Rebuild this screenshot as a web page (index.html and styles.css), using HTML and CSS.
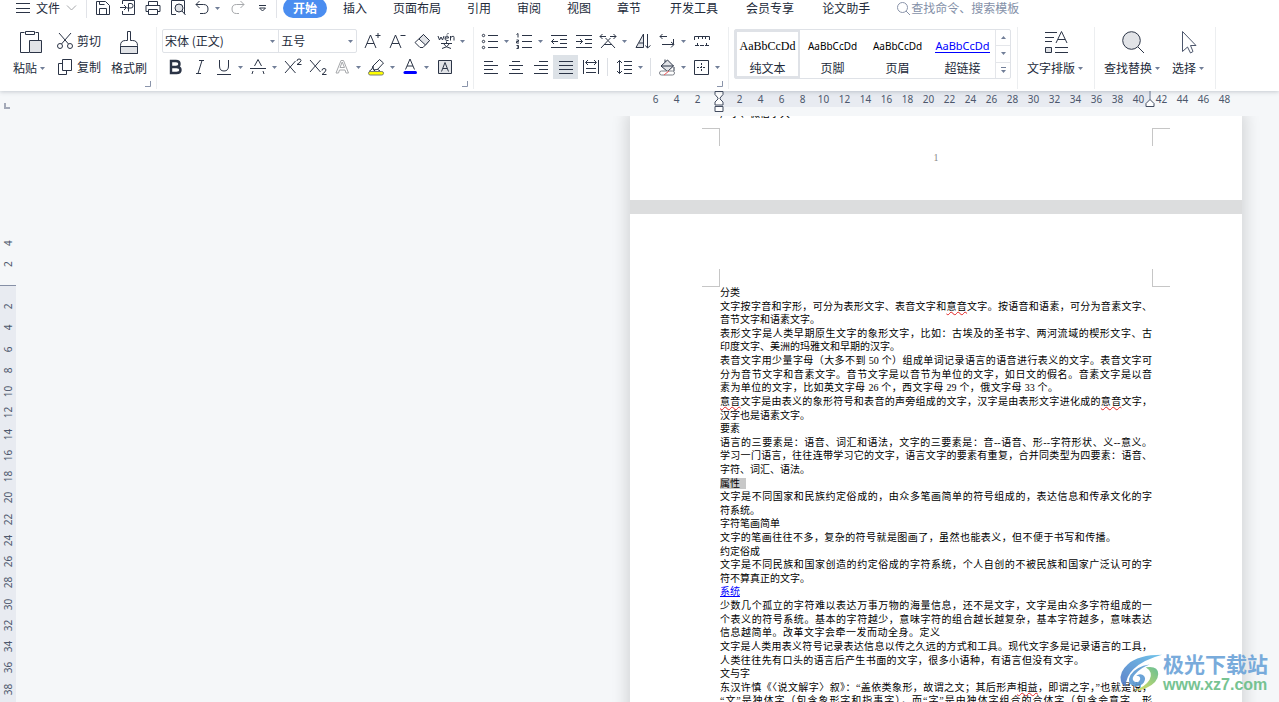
FILE: index.html
```html
<!DOCTYPE html>
<html lang="zh-CN">
<head>
<meta charset="utf-8">
<title>文字文稿</title>
<link rel="stylesheet" href="styles.css">
</head>
<body>
<svg class="defs" aria-hidden="true">
  <symbol id="caret" viewBox="0 0 7 5"><path d="M1 1h5L3.500 4z" fill="#717e98"/></symbol>
  <symbol id="launch" viewBox="0 0 6 6"><path d="M5.500 0v5.500H0" fill="none" stroke="#8a94aa"/></symbol>
</svg>

<header class="header">
  <div class="topbar">
    <button class="file"><svg width="14" height="12" viewBox="0 0 14 12"><path d="M0 1.500h14M0 6.500h14M0 10.500h14"/></svg>文件<svg class="faint" width="11" height="8" viewBox="0 0 11 8"><path d="M1 1.500l4.500 4.500L10 1.500"/></svg></button>
    <div class="quick">
      <button aria-label="保存"><svg width="18" height="18" viewBox="0 0 18 18"><path d="M2.500 2.500h9l4 4v9h-13zM5.500 15.500v-6h7v6M5.500 2.500v3h5"/></svg></button>
      <button aria-label="输出为PDF"><svg width="18" height="18" viewBox="0 0 18 18"><path d="M3.500 5V1.500h12v14h-12V12M1 8.500h6M5 6l2.500 2.500L5 11M9.500 12.500v-8h2.500q2 0 2 2.300t-2 2.200H8"/></svg></button>
      <button aria-label="打印"><svg width="18" height="18" viewBox="0 0 18 18"><path d="M4.500 6V2.500h9V6M4.500 12.500h-2.500V6.500h14v6h-2.500M4.500 10.500h9v5h-9z"/></svg></button>
      <button aria-label="打印预览"><svg width="18" height="18" viewBox="0 0 18 18"><path d="M7 15.500H2.500v-14h13V15"/><circle cx="10" cy="9" r="4" fill="#e1e3e7"/><path d="M13 12l3.500 4"/></svg></button>
      <button class="undo" aria-label="撤销"><svg width="16" height="18" viewBox="0 0 16 18"><path d="M5.500 2L2 5.500 5.500 9M2 5.500h7.500q4.500 0 4.500 4.500t-4.500 4.500H6"/></svg><svg class="caret"><use href="#caret"/></svg></button>
      <button class="redo faint" aria-label="恢复"><svg width="16" height="18" viewBox="0 0 16 18"><path d="M10.500 2L14 5.500 10.500 9M14 5.500H6.500Q2 5.500 2 10t4.500 4.500H9"/></svg></button>
      <button aria-label="自定义快速访问"><svg width="9" height="8" viewBox="0 0 9 8"><path d="M1 1.500h7M1.500 4h6l-3 3z"/></svg></button>
    </div>
    <nav class="tabs">
      <button class="tab active">开始</button>
      <button class="tab">插入</button>
      <button class="tab">页面布局</button>
      <button class="tab">引用</button>
      <button class="tab">审阅</button>
      <button class="tab">视图</button>
      <button class="tab">章节</button>
    </nav>
    <nav class="tabs extra">
      <button class="tab">开发工具</button>
      <button class="tab">会员专享</button>
      <button class="tab">论文助手</button>
    </nav>
    <label class="search"><svg width="15" height="15" viewBox="0 0 15 15"><circle cx="6.500" cy="6.500" r="5"/><path d="M10 10l4 4"/></svg><input type="text" aria-label="查找命令" placeholder="查找命令、搜索模板"></label>
  </div>

  <div class="ribbon">
    <section class="group clipboard">
      <button class="big"><svg width="26" height="26" viewBox="0 0 26 26"><path d="M7.500 3.500h-4v20H12M18.500 3.500h3V11M8.500 2.500h9v3h-9z"/><path d="M12.500 11.500h12v12h-12z" fill="#e1e3e7"/></svg><span>粘贴<svg class="caret"><use href="#caret"/></svg></span></button>
      <div class="stack">
        <button class="mini"><svg width="18" height="18" viewBox="0 0 18 18"><path d="M3 1l9.500 11M15 1L5.500 12"/><circle cx="4" cy="14" r="2.500"/><circle cx="14" cy="14" r="2.500"/></svg>剪切</button>
        <button class="mini"><svg width="18" height="18" viewBox="0 0 18 18"><path d="M6.500 1.500h9v11h-9zM6.500 5.500h-4v11h8v-4"/></svg>复制</button>
      </div>
      <button class="big"><svg width="26" height="26" viewBox="0 0 26 26"><path d="M11.500 2.500h3v9h2q5 0 5 5v8h-17v-8q0-5 5-5h2z"/><path d="M4.500 17.500h17v7h-17z" fill="#e1e3e7"/></svg><span>格式刷</span></button>
      <svg class="launch"><use href="#launch"/></svg>
    </section>

    <section class="group font">
      <div class="row">
        <div class="combo">
          <label class="pick family"><select aria-label="字体"><option>宋体 (正文)</option></select><svg class="caret"><use href="#caret"/></svg></label>
          <label class="pick size"><select aria-label="字号"><option>五号</option></select><svg class="caret"><use href="#caret"/></svg></label>
        </div>
        <button class="ico" aria-label="增大字号"><svg width="20" height="20" viewBox="0 0 20 20"><path d="M3 17L8.500 4 14 17M5 12.500h7M13.500 4.500h5M16 2v5"/></svg></button>
        <button class="ico" aria-label="减小字号"><svg width="20" height="20" viewBox="0 0 20 20"><path d="M3 17L8.500 4 14 17M5 12.500h7M13.500 4.500h5"/></svg></button>
        <button class="ico" aria-label="清除格式"><svg width="20" height="20" viewBox="0 0 20 20"><path d="M3 11.500l8.500-8 6 6-6.500 7H8z"/><path d="M7 8l6.500 6 4-4.500-6-6z" fill="#e1e3e7"/></svg></button>
        <button class="ico split" aria-label="拼音指南"><svg width="20" height="20" viewBox="0 0 20 20"><path d="M2 5l1.500 4L5 6l1.500 3L8 5M9 7h3.500Q12.500 5 11 5T9 7t2 2.500h1.500M11 3.500l1.500-1.500M14.500 9.500V5M14.500 6.500Q18 4 18 6.500v3M5 12.500h11M10.500 10.500V12M7.500 12.500q2 4 7.500 5M13.500 12.500q-2 4-7.500 5"/></svg><svg class="caret"><use href="#caret"/></svg></button>
      </div>
      <div class="row">
        <button class="ico" aria-label="加粗"><svg width="20" height="20" viewBox="0 0 20 20"><path d="M6 4h5q3.500 0 3.500 3T11 10H6zM6 10h5.500q4 0 4 3t-4 3H6z" stroke-width="2.400"/></svg></button>
        <button class="ico" aria-label="倾斜"><svg width="20" height="20" viewBox="0 0 20 20"><path d="M9 3.500h5M6 16.500h5M12 3.500l-4 13"/></svg></button>
        <button class="ico split" aria-label="下划线"><svg width="20" height="20" viewBox="0 0 20 20"><path d="M5.500 3v6q0 5 4.500 5t4.500-5V3M3 17.500h14"/></svg><svg class="caret"><use href="#caret"/></svg></button>
        <button class="ico split" aria-label="删除线"><svg width="20" height="20" viewBox="0 0 20 20"><path d="M2 11.500h16M6.500 9L10 2.500 13.500 9M5 14l-1 3M15 14l1 3"/></svg><svg class="caret"><use href="#caret"/></svg></button>
        <button class="ico" aria-label="上标"><svg width="20" height="20" viewBox="0 0 20 20"><path d="M2 4l10.500 12M12.500 4L2 16M14 4q0-2 2-2t2 1.500T14 7.500h4.500"/></svg></button>
        <button class="ico" aria-label="下标"><svg width="20" height="20" viewBox="0 0 20 20"><path d="M2 3l10.500 12M12.500 3L2 15M14 13.500q0-2 2-2t2 1.500-4 4.500h4.500"/></svg></button>
        <button class="ico split faint" aria-label="文字效果"><svg width="20" height="20" viewBox="0 0 20 20"><path d="M4 16L9 3.500h2.500L16.500 16H14l-1-3H7.500l-1 3zM8 10.500h4.500L10.200 5z"/></svg><svg class="caret"><use href="#caret"/></svg></button>
        <button class="ico split" aria-label="突出显示"><svg width="20" height="20" viewBox="0 0 20 20"><path d="M7 9l6.500-6.500 4 3.500-6 6.500-4 .5zM7 9l-1 3-3 2.500h5l1-2M11 12l3 2"/><rect x="2.500" y="14.500" width="15" height="3.500" rx="1.700" fill="#ff0" stroke="#7b8070"/></svg><svg class="caret"><use href="#caret"/></svg></button>
        <button class="ico split" aria-label="字体颜色"><svg width="20" height="20" viewBox="0 0 20 20"><path d="M5.500 12.500L10 2l4.500 10.500M7 9h6"/><rect x="3.500" y="14" width="13.500" height="3" rx="1.500" fill="#00f" stroke="none"/></svg><svg class="caret"><use href="#caret"/></svg></button>
        <button class="ico" aria-label="字符底纹"><svg width="20" height="20" viewBox="0 0 20 20"><path d="M3.500 3.500h13v13h-13z" fill="#e1e3e7"/><path d="M6.500 14.500L10 5.500l3.500 9M8 11.500h4"/></svg></button>
      </div>
      <svg class="launch"><use href="#launch"/></svg>
    </section>

    <section class="group para">
      <div class="row">
        <button class="ico split" aria-label="项目符号"><svg width="20" height="20" viewBox="0 0 20 20"><path d="M8 4.500h10M8 10.500h10M8 16.500h10"/><circle cx="3.500" cy="4.500" r="1.200"/><circle cx="3.500" cy="10.500" r="1.200"/><circle cx="3.500" cy="16.500" r="1.200"/></svg><svg class="caret"><use href="#caret"/></svg></button>
        <button class="ico split" aria-label="编号"><svg width="20" height="20" viewBox="0 0 20 20"><path d="M8 4.500h10M8 10.500h10M8 16.500h10M2.500 3.500L4 2.500v4M2.500 9h2v1.500h-2V12h2.500M2.500 14.500h2v3h-2M3 16h1.500"/></svg><svg class="caret"><use href="#caret"/></svg></button>
        <button class="ico" aria-label="减少缩进"><svg width="20" height="20" viewBox="0 0 20 20"><path d="M2 4.500h16M11 8.500h7M11 12.500h7M2 16.500h16M2.500 10.500H9M5 8l-2.500 2.500L5 13"/></svg></button>
        <button class="ico" aria-label="增加缩进"><svg width="20" height="20" viewBox="0 0 20 20"><path d="M2 4.500h16M11 8.500h7M11 12.500h7M2 16.500h16M2 10.500h6.500M6 8l2.500 2.500L6 13"/></svg></button>
        <button class="ico split" aria-label="中文版式"><svg width="20" height="20" viewBox="0 0 20 20"><path d="M3 17l7-7.500 7 7.500M6 13.500h8M2 5.500h6M4.500 3L2 5.500 4.500 8M12 5.500h6M15.500 3L18 5.500 15.500 8M7.500 7l2.500 2.500L12.500 7"/></svg><svg class="caret"><use href="#caret"/></svg></button>
        <button class="ico" aria-label="排序"><svg width="20" height="20" viewBox="0 0 20 20"><path d="M3 16.500L10.500 3v13.500zM6 12h4.500" fill="#e1e3e7"/><path d="M14.500 3v14M12.500 14.500l2 2.500 3-2.500"/></svg></button>
        <button class="ico split" aria-label="显示段落标记"><svg width="20" height="20" viewBox="0 0 20 20"><path d="M10 5.500H3M5.500 3L3 5.500 5.500 8M5 13.500h11.500V8M14 11l3 2.500-3 3"/></svg><svg class="caret"><use href="#caret"/></svg></button>
        <button class="ico" aria-label="制表位"><svg width="20" height="20" viewBox="0 0 20 20"><path d="M2.500 9V5.500h15V9M6.500 5.500V8M10.500 5.500V8M13.500 5.500V8M3 14.500h4M8 14.500h4M13 14.500h4M5.500 12v2.500M14.500 12v2.500"/></svg></button>
      </div>
      <div class="row">
        <button class="ico" aria-label="左对齐"><svg width="20" height="20" viewBox="0 0 20 20"><path d="M3 4.500h9M3 8.500h14M3 12.500h9M3 16.500h14"/></svg></button>
        <button class="ico" aria-label="居中"><svg width="20" height="20" viewBox="0 0 20 20"><path d="M6 4.500h8M3 8.500h14M6 12.500h8M3 16.500h14"/></svg></button>
        <button class="ico" aria-label="右对齐"><svg width="20" height="20" viewBox="0 0 20 20"><path d="M8 4.500h9M3 8.500h14M8 12.500h9M3 16.500h14"/></svg></button>
        <button class="ico on" aria-label="两端对齐" aria-pressed="true"><svg width="20" height="20" viewBox="0 0 20 20"><path d="M3 4.500h14M3 8.500h14M3 12.500h14M3 16.500h14"/></svg></button>
        <button class="ico" aria-label="分散对齐"><svg width="20" height="20" viewBox="0 0 20 20"><path d="M2.500 3v14M17.500 3v14M5 5.500h10M7 3L4.500 5.500 7 8M13 3l2.500 2.500L13 8M5 11.500h10M5 15.500h10"/></svg></button>
        <i class="bar"></i>
        <button class="ico split" aria-label="行距"><svg width="20" height="20" viewBox="0 0 20 20"><path d="M5.500 3.500v13M3 6l2.500-2.500L8 6M3 14l2.500 2.500L8 14M10 4.500h8M10 8.500h8M10 12.500h8M10 16.500h8"/></svg><svg class="caret"><use href="#caret"/></svg></button>
        <i class="bar"></i>
        <button class="ico split" aria-label="底纹颜色"><svg width="20" height="20" viewBox="0 0 20 20"><path d="M4 9l6.500-6 6 6-6 5.500zM4 9h12.500M8 5V2.500M17 10v4" fill="#e1e3e7"/><rect x="2.500" y="14" width="15" height="4" rx="2" fill="#fff" stroke="#7c8088"/><path d="M7 18l5-4" stroke="#e55"/></svg><svg class="caret"><use href="#caret"/></svg></button>
        <button class="ico split" aria-label="边框"><svg width="20" height="20" viewBox="0 0 20 20"><path d="M3.500 3.500h14v14h-14z"/><path d="M10.500 6v9M6 10.500h9" stroke-dasharray="2 1"/></svg><svg class="caret"><use href="#caret"/></svg></button>
      </div>
      <svg class="launch"><use href="#launch"/></svg>
    </section>

    <section class="group styles">
      <div class="gallery">
        <button class="style on"><b class="serif">AaBbCcDd</b>纯文本</button>
        <button class="style"><b>AaBbCcDd</b>页脚</button>
        <button class="style"><b>AaBbCcDd</b>页眉</button>
        <button class="style"><b class="linked">AaBbCcDd</b>超链接</button>
        <div class="scroll">
          <button aria-label="上一行"><svg width="7" height="5" viewBox="0 0 7 5"><path d="M1 4h5L3.500 1z" fill="#717e98" stroke="none"/></svg></button>
          <button aria-label="下一行"><svg class="caret"><use href="#caret"/></svg></button>
          <button aria-label="更多样式"><svg width="7" height="8" viewBox="0 0 7 8"><path d="M1 1.500h5" stroke="#717e98"/><path d="M1 4h5L3.500 7z" fill="#717e98" stroke="none"/></svg></button>
        </div>
      </div>
    </section>

    <section class="group tool">
      <button class="big"><svg width="26" height="26" viewBox="0 0 26 26"><path d="M2 3.500h12M2 8.500h9M2 12.500h7M13 14l5.500-11.500L24 14M15 10.500h7M12 18.500h13M12 23.500h13"/><path d="M2.500 18.500h6v5h-6z" fill="#e1e3e7"/></svg><span>文字排版<svg class="caret"><use href="#caret"/></svg></span></button>
    </section>
    <section class="group tool">
      <button class="big"><svg width="26" height="26" viewBox="0 0 26 26"><circle cx="11.500" cy="11.500" r="8.800" fill="#e1e3e7"/><path d="M18 18l6 6"/></svg><span>查找替换<svg class="caret"><use href="#caret"/></svg></span></button>
      <button class="big"><svg width="26" height="26" viewBox="0 0 26 26"><path d="M6.500 2.500v20l5-4.500 3 6 2.500-1.500-2.500-6H20z" fill="#fff" stroke="#4c566c"/></svg><span>选择<svg class="caret"><use href="#caret"/></svg></span></button>
    </section>
  </div>
</header>

<main class="work">
  <div class="hruler">
    <svg class="tabstop" width="6" height="6" viewBox="0 0 6 6"><path d="M1 0v5h5" fill="none" stroke="#a3a9b8" stroke-width="2"/></svg>
    <div class="ticks out"><span>6</span><span>4</span><span>2</span></div>
    <div class="ticks in"><span>2</span><span>4</span><span>6</span><span>8</span><span>10</span><span>12</span><span>14</span><span>16</span><span>18</span><span>20</span><span>22</span><span>24</span><span>26</span><span>28</span><span>30</span><span>32</span><span>34</span><span>36</span><span>38</span><span>40</span>
      <svg class="indent left" width="10" height="22" viewBox="0 0 10 22"><path d="M1 .5h8v3L6 7v1l3 3v3H1v-3l3-3V7L1 3.500zM1 15.500h8v5H1z" fill="#fff" stroke="#434c60"/></svg>
      <svg class="indent right" width="10" height="17" viewBox="0 0 10 17"><path d="M5 0v9" stroke="#717e98"/><path d="M1 15.500v-3l4-4 4 4v3z" fill="#fff" stroke="#434c60"/></svg>
    </div>
    <div class="ticks tail"><span>42</span><span>44</span><span>46</span><span>48</span></div>
  </div>

  <div class="desk">
    <div class="vruler">
      <div class="vmargin"><span>4</span><span>2</span></div>
      <div class="vbody"><span>2</span><span>4</span><span>6</span><span>8</span><span>10</span><span>12</span><span>14</span><span>16</span><span>18</span><span>20</span><span>22</span><span>24</span><span>26</span><span>28</span><span>30</span><span>32</span><span>34</span><span>36</span><span>38</span></div>
    </div>
    <div class="pages">
      <article class="sheet first">
        <p class="cut">广字、微信字大</p>
        <div class="marks top"><i></i><i></i></div>
        <footer>1</footer>
      </article>
      <article class="sheet">
        <div class="marks bottom"><i></i><i></i></div>
        <div class="text">
          <p class="end">分类</p>
          <p>文字按字音和字形，可分为表形文字、表音文字和<u>意音</u>文字。按语音和语素，可分为音素文字、</p>
          <p class="end">音节文字和语素文字。</p>
          <p>表形文字是人类早期原生文字的象形文字，比如：古埃及的圣书字、两河流域的楔形文字、古</p>
          <p class="end">印度文字、美洲的玛雅文和早期的汉字。</p>
          <p>表音文字用少量字母（大多不到 50 个）组成单词记录语言的语音进行表义的文字。表音文字可</p>
          <p>分为音节文字和音素文字。音节文字是以音节为单位的文字，如日文的假名。音素文字是以音</p>
          <p class="most">素为单位的文字，比如英文字母 26 个，西文字母 29 个，俄文字母 33 个。</p>
          <p><u>意音</u>文字是由表义的象形符号和表音的声旁组成的文字，汉字是由表形文字进化成的<u>意音</u>文字，</p>
          <p class="end">汉字也是语素文字。</p>
          <p class="end">要素</p>
          <p>语言的三要素是：语音、词汇和语法，文字的三要素是：音--语音、形--字符形状、义--意义。</p>
          <p>学习一门语言，往往连带学习它的文字，语言文字的要素有重复，合并同类型为四要素：语音、</p>
          <p class="end">字符、词汇、语法。</p>
          <p class="end"><mark>属性</mark></p>
          <p>文字是不同国家和民族约定俗成的，由众多笔画简单的符号组成的，表达信息和传承文化的字</p>
          <p class="end">符系统。</p>
          <p class="end">字符笔画简单</p>
          <p class="long">文字的笔画往往不多，复杂的符号就是图画了，虽然也能表义，但不便于书写和传播。</p>
          <p class="end">约定俗成</p>
          <p>文字是不同民族和国家创造的约定俗成的字符系统，个人自创的不被民族和国家广泛认可的字</p>
          <p class="end">符不算真正的文字。</p>
          <p class="end"><a href="#system">系统</a></p>
          <p>少数几个孤立的字符难以表达万事万物的海量信息，还不是文字，文字是由众多字符组成的一</p>
          <p>个表义的符号系统。基本的字符越少，意味字符的组合越长越复杂，基本字符越多，意味表达</p>
          <p class="half">信息越简单。改革文字会牵一发而动全身。定义</p>
          <p>文字是人类用表义符号记录表达信息以传之久远的方式和工具。现代文字多是记录语言的工具，</p>
          <p class="wide">人类往往先有口头的语言后产生书面的文字，很多小语种，有语言但没有文字。</p>
          <p class="end">文与字</p>
          <p>东汉许慎《〈说文解字〉叙》：“盖依类象形，故谓之文；其后形声<u>相益</u>，即谓之字，”也就是说，</p>
          <p>“文”是独体字（包含象形字和指事字），而“字”是由独体字组合的合体字（包含会意字、形</p>
        </div>
      </article>
    </div>
  </div>
</main>

<aside class="brand">
  <svg width="44" height="42" viewBox="0 0 46 42">
    <defs>
      <linearGradient id="sky" x1="0" y1="1" x2="1" y2="0"><stop offset="0" stop-color="#4f76c4"/><stop offset="1" stop-color="#62bfe9"/></linearGradient>
      <linearGradient id="leaf" x1="0" y1="1" x2="1" y2="0"><stop offset="0" stop-color="#d9dd4e"/><stop offset="1" stop-color="#58b88b"/></linearGradient>
    </defs>
    <path d="M45 2Q20 2 9 12 0 20 2 29q1 5 5 6 0-10 8-18Q26 7 45 2z" fill="url(#sky)"/>
    <path d="M32 12q-14 2-20 11-4 8 2 11 7 3 12-3 3-5-1-8-4-2-7 1 5 0 4 4-2 4-6 2-4-3 1-8 6-7 15-10z" fill="#5b9ad3"/>
    <path d="M28 15q13-2 13 7 0 9-13 15-6 3-12 2 11-3 16-11 4-8-4-13z" fill="url(#leaf)"/>
  </svg>
  <div><strong>极光下载站</strong><span>www.xz7.com</span></div>
</aside>
</body>
</html>
```

FILE: styles.css
```css
* { box-sizing: border-box; }

body {
  margin: 0;
  height: 100vh;
  display: flex;
  flex-direction: column;
  overflow: hidden;
  position: relative;
  background: #f5f7f9;
  color: #222a3a;
  font: 12px/16px "Noto Sans CJK SC", sans-serif;
}

button, input, select { font: inherit; color: inherit; }

button {
  display: flex;
  align-items: center;
  justify-content: center;
  flex: none;
  padding: 0;
  border: 0;
  background: none;
  white-space: nowrap;
}

svg { flex: none; fill: none; stroke: #2b3446; stroke-width: 1; }
.defs { position: absolute; width: 0; height: 0; }
.caret { width: 7px; height: 5px; stroke: none; }
.faint, .faint svg { stroke: #a6a8ab; }
.faint .caret { stroke: none; }

/* Header */
.header {
  flex: none;
  position: relative;
  z-index: 1;
  background: #fff;
  box-shadow: 0 1px 4px rgba(60, 70, 90, .25);
}

.topbar { display: flex; align-items: center; height: 16px; padding-left: 16px; }
.file { gap: 6px; width: 71px; height: 20px; border-right: 1px solid #e1e3e8; justify-content: flex-start; }
.quick { display: flex; align-items: center; gap: 7px; height: 20px; padding: 0 9px 0 7px; border-right: 1px solid #e1e3e8; }
.undo { gap: 4px; }
.redo { margin: 0 5px 0 2px; }
.tabs { display: flex; align-items: center; gap: 26px; margin-left: 6px; }
.tabs.extra { gap: 28px; margin-left: 29px; }
.active { width: 44px; height: 20px; margin-right: -10px; border-radius: 10px; background: #4a8df0; color: #fff; font-weight: 700; }
.search { display: flex; align-items: center; margin-left: 26px; flex: 1; }
.search svg { stroke: #8a94aa; }
.search input { width: 120px; padding: 0; border: 0; outline: 0; background: none; }
.search input::placeholder { color: #8490a8; opacity: 1; }

/* Ribbon */
.ribbon { display: flex; padding: 11px 0 2px; }
.group { position: relative; height: 62px; padding-top: 1px; border-right: 1px solid #eceef0; }
.launch { position: absolute; right: 5px; bottom: 2px; width: 6px; height: 6px; }
.row { display: flex; align-items: center; height: 26px; }
.ico { width: 25px; height: 24px; }
.split { width: 34px; justify-content: flex-start; padding-left: 2px; gap: 3px; }
.on { background: #dde2e7; }
.bar { width: 1px; height: 18px; margin: 0 4px; background: #dcdfe4; }

.big { flex-direction: column; gap: 4px; padding-top: 1px; }
.big span { display: flex; align-items: center; gap: 2px; height: 18px; }
.stack { display: flex; flex-direction: column; }
.mini { height: 26px; gap: 3px; }

.clipboard { display: flex; align-items: flex-start; gap: 10px; padding-left: 13px; padding-right: 9px; }
.font { padding-left: 5px; padding-right: 5px; }
.para { padding-left: 4px; padding-right: 5px; }

.combo { display: flex; width: 195px; height: 24px; margin-right: 2px; border: 1px solid #dfe2e7; border-radius: 2px; }
.pick { display: flex; position: relative; }
.pick select { width: 100%; padding: 0 2px; border: 0; appearance: none; background: none; }
.pick .caret { position: absolute; right: 2px; top: 9px; }
.family { flex: 3; border-right: 1px solid #dfe2e7; }
.size { flex: 2; }

.styles { padding: 2px 6px 0 5px; }
.gallery { display: flex; height: 50px; border: 1px solid #dfe2e7; border-radius: 2px; }
.style { flex-direction: column; width: 65px; gap: 5px; padding-top: 4px; }
.style b { height: 18px; color: #000; font: 10px/18px "Noto Sans", sans-serif; }
.style .serif { font: 12px/18px "Liberation Serif", serif; }
.style .linked { height: 16px; margin-bottom: 2px; border-bottom: 1px solid #00f; color: #00f; font-size: 11px; }
.style.on { border: 2px solid #dfe2e7; background: none; }
.scroll { display: flex; flex-direction: column; width: 15px; border-left: 1px solid #e4e6ea; }
.scroll button { flex: 1; }
.scroll button + button { border-top: 1px solid #e4e6ea; }
.tool { display: flex; align-items: flex-start; gap: 11px; padding-left: 9px; padding-right: 10px; }

/* Rulers */
.work { flex: 1; min-height: 0; display: flex; flex-direction: column; }
.hruler { display: flex; flex: none; height: 25px; color: #4d576c; font: 10px/16px "Noto Sans", sans-serif; }
.tabstop { margin: 12px 0 0 4px; }
.ticks { display: flex; height: 16px; }
.ticks span { width: 21px; text-align: center; }
.out { flex: 1; justify-content: flex-end; padding-right: 11px; }
.in { position: relative; width: 432px; padding-left: 10px; background: #e8ebf1; }
.tail { width: 128px; }
.indent { position: absolute; top: 0; stroke-width: 1; }
.indent.left { left: -5px; }
.indent.right { right: -4px; }

.desk { flex: 1; min-height: 0; display: flex; justify-content: space-between; overflow: hidden; }
.vruler { display: flex; flex-direction: column; width: 16px; color: #4d576c; font: 10px/16px "Noto Sans", sans-serif; }
.vruler span { display: flex; align-items: center; justify-content: center; min-height: 0; writing-mode: vertical-rl; transform: rotate(180deg); }
.vmargin { display: grid; align-content: end; grid-auto-rows: 21px; height: 170px; padding-bottom: 10px; border-bottom: 1px solid #8690a6; }
.vbody { flex: 1; min-height: 0; display: grid; grid-template-rows: repeat(19, 1fr); padding: 10px 0 2px; background: #e8ebf1; }

/* Pages */
.pages {
  display: flex;
  flex-direction: column;
  gap: 14px;
  width: 612px;
  height: 1000px;
  margin-right: 37px;
  background: #dcddde;
  box-shadow: 0 0 14px 4px rgba(0, 0, 0, .13);
}
.sheet { flex: 1; padding-top: 55px; background: #fff; color: #000; }
.sheet p { margin: 0; }
.first { flex: none; height: 84px; padding-top: 0; }
.sheet .cut { display: flex; align-items: flex-end; height: 3px; margin: 0 90px; overflow: hidden; font-size: 10px; line-height: 13px; }
.marks { display: flex; justify-content: space-between; padding: 0 72px; }
.marks i { width: 18px; height: 18px; border: 0 solid #c6c6c6; }
.marks i:first-child { border-right-width: 1px; }
.marks i:last-child { border-left-width: 1px; }
.top { margin-top: 9px; }
.top i { border-top-width: 1px; }
.bottom i { border-bottom-width: 1px; }
.first footer { margin-top: 4px; text-align: center; color: #888; font: 10px/16px "Liberation Serif", serif; }

.text {
  display: grid;
  grid-template-rows: repeat(31, 1fr);
  height: 422px;
  margin: -1px 90px 0;
  font: 10px/13px "Liberation Serif", "Noto Sans CJK SC", serif;
}
.text p { min-height: 0; text-align: justify; text-align-last: justify; }
.text .end { text-align-last: left; }
.text .half { width: 220px; }
.text .most { width: 338px; }
.text .wide { width: 364px; }
.text .long { width: 396px; }
.text u { text-decoration: underline wavy #e02020 1px; text-underline-offset: 1px; }
.text a { color: #00f; }
.text mark { padding-right: 6px; background: #c8c8c8; }

/* Site mark */
.brand { position: absolute; right: 10px; bottom: 7px; display: flex; align-items: center; opacity: .9; }
.brand svg { stroke: none; }
.brand div { display: flex; flex-direction: column; width: 106px; }
.brand strong { color: #6ba3d8; font-size: 21px; line-height: 24px; white-space: nowrap; }
.brand span { color: #69bd87; font: 700 16px/20px "Liberation Sans", sans-serif; }
```
